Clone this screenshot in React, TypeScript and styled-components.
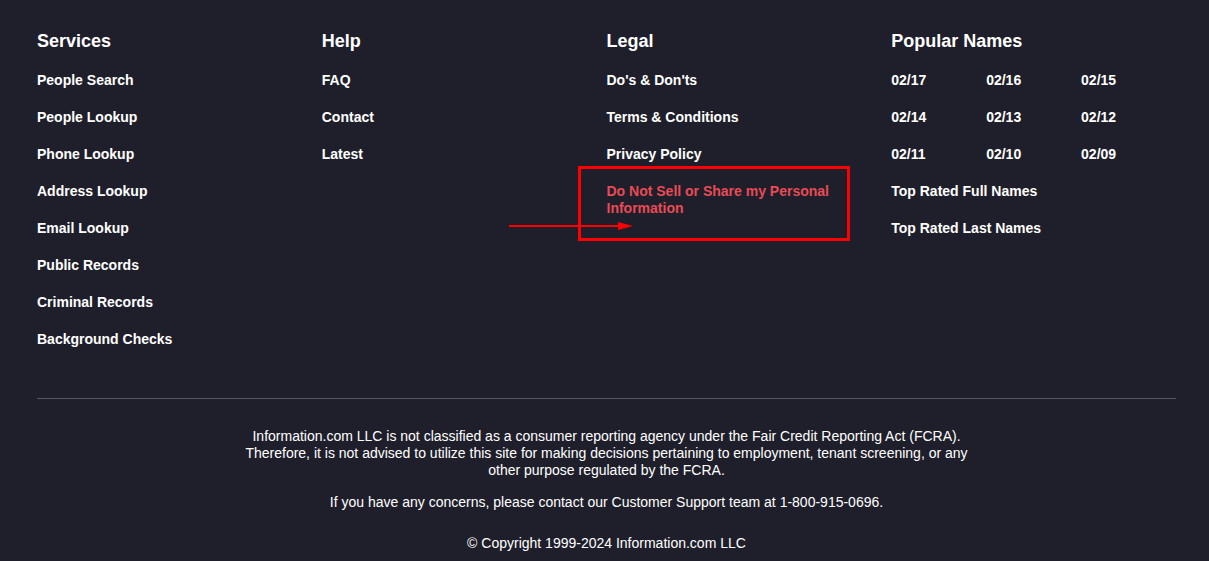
import React from "react";
import styled, { createGlobalStyle } from "styled-components";

const GlobalStyle = createGlobalStyle`
  html, body { margin: 0; padding: 0; background: #1f1f2b; }
  body { font-family: "Liberation Sans", Arial, sans-serif; color: #ffffff; }
  * { box-sizing: border-box; }
`;

const Footer = styled.footer`
  position: relative;
  width: 1209px;
  min-height: 561px;
  background: #1f1f2b;
  padding: 31px 33px 0 37px;
`;

const Columns = styled.div`
  display: grid;
  grid-template-columns: repeat(4, 1fr);
`;

const Column = styled.div`
  display: flex;
  flex-direction: column;
`;

const Heading = styled.h3`
  margin: 0 0 20px;
  font-size: 18px;
  line-height: 21px;
  font-weight: 700;
  color: #ffffff;
`;

const LinkList = styled.ul<{ $spaced?: boolean }>`
  list-style: none;
  margin: ${(p) => (p.$spaced ? "20px 0 0" : "0")};
  padding: 0;
  display: flex;
  flex-direction: column;
  gap: 20px;
`;

const DateGrid = styled.ul`
  list-style: none;
  margin: 0;
  padding: 0;
  display: grid;
  grid-template-columns: repeat(3, 1fr);
  row-gap: 20px;
`;

const Item = styled.li<{ $wide?: boolean }>`
  font-size: 14px;
  line-height: 17px;
  font-weight: 700;
  max-width: ${(p) => (p.$wide ? "240px" : "none")};
`;

const Link = styled.a<{ $alert?: boolean }>`
  color: ${(p) => (p.$alert ? "#e84b55" : "#ffffff")};
  text-decoration: none;
`;

const Divider = styled.hr`
  margin: 50px 0 0;
  border: 0;
  border-top: 1px solid #56565f;
`;

const Legal = styled.div`
  padding-top: 29px;
  text-align: center;
  font-size: 14px;
  line-height: 17px;
  color: #ffffff;
`;

const Paragraph = styled.p`
  margin: 0 auto 15px;
  max-width: 730px;
`;

const Copyright = styled.p`
  margin: 24px 0 0;
`;

const Highlight = styled.div`
  position: absolute;
  left: 578px;
  top: 166px;
  width: 272px;
  height: 75px;
  border: 3px solid #ff0000;
  pointer-events: none;
`;

const Arrow = styled.svg`
  position: absolute;
  left: 508px;
  top: 221px;
  pointer-events: none;
`;

const services = [
  "People Search",
  "People Lookup",
  "Phone Lookup",
  "Address Lookup",
  "Email Lookup",
  "Public Records",
  "Criminal Records",
  "Background Checks",
];
const help = ["FAQ", "Contact", "Latest"];
const legal = ["Do's & Don'ts", "Terms & Conditions", "Privacy Policy"];
const dates = ["02/17", "02/16", "02/15", "02/14", "02/13", "02/12", "02/11", "02/10", "02/09"];

export default function App() {
  return (
    <>
      <GlobalStyle />
      <Footer>
        <Columns>
          <Column>
            <Heading>Services</Heading>
            <LinkList>
              {services.map((s) => (
                <Item key={s}>
                  <Link href="#">{s}</Link>
                </Item>
              ))}
            </LinkList>
          </Column>
          <Column>
            <Heading>Help</Heading>
            <LinkList>
              {help.map((s) => (
                <Item key={s}>
                  <Link href="#">{s}</Link>
                </Item>
              ))}
            </LinkList>
          </Column>
          <Column>
            <Heading>Legal</Heading>
            <LinkList>
              {legal.map((s) => (
                <Item key={s}>
                  <Link href="#">{s}</Link>
                </Item>
              ))}
              <Item $wide>
                <Link href="#" $alert>
                  Do Not Sell or Share my Personal Information
                </Link>
              </Item>
            </LinkList>
          </Column>
          <Column>
            <Heading>Popular Names</Heading>
            <DateGrid>
              {dates.map((d) => (
                <Item key={d}>
                  <Link href="#">{d}</Link>
                </Item>
              ))}
            </DateGrid>
            <LinkList $spaced>
              <Item>
                <Link href="#">Top Rated Full Names</Link>
              </Item>
              <Item>
                <Link href="#">Top Rated Last Names</Link>
              </Item>
            </LinkList>
          </Column>
        </Columns>
        <Divider />
        <Legal>
          <Paragraph>
            Information.com LLC is not classified as a consumer reporting agency under the Fair Credit
            Reporting Act (FCRA). Therefore, it is not advised to utilize this site for making decisions
            pertaining to employment, tenant screening, or any other purpose regulated by the FCRA.
          </Paragraph>
          <Paragraph>
            If you have any concerns, please contact our Customer Support team at 1-800-915-0696.
          </Paragraph>
          <Copyright>© Copyright 1999-2024 Information.com LLC</Copyright>
        </Legal>
        <Highlight />
        <Arrow width="126" height="10" viewBox="0 0 126 10">
          <line x1="1" y1="5" x2="112" y2="5" stroke="#ff0000" strokeWidth="2" />
          <polygon points="110,1 125,5 110,9" fill="#ff0000" />
        </Arrow>
      </Footer>
    </>
  );
}
